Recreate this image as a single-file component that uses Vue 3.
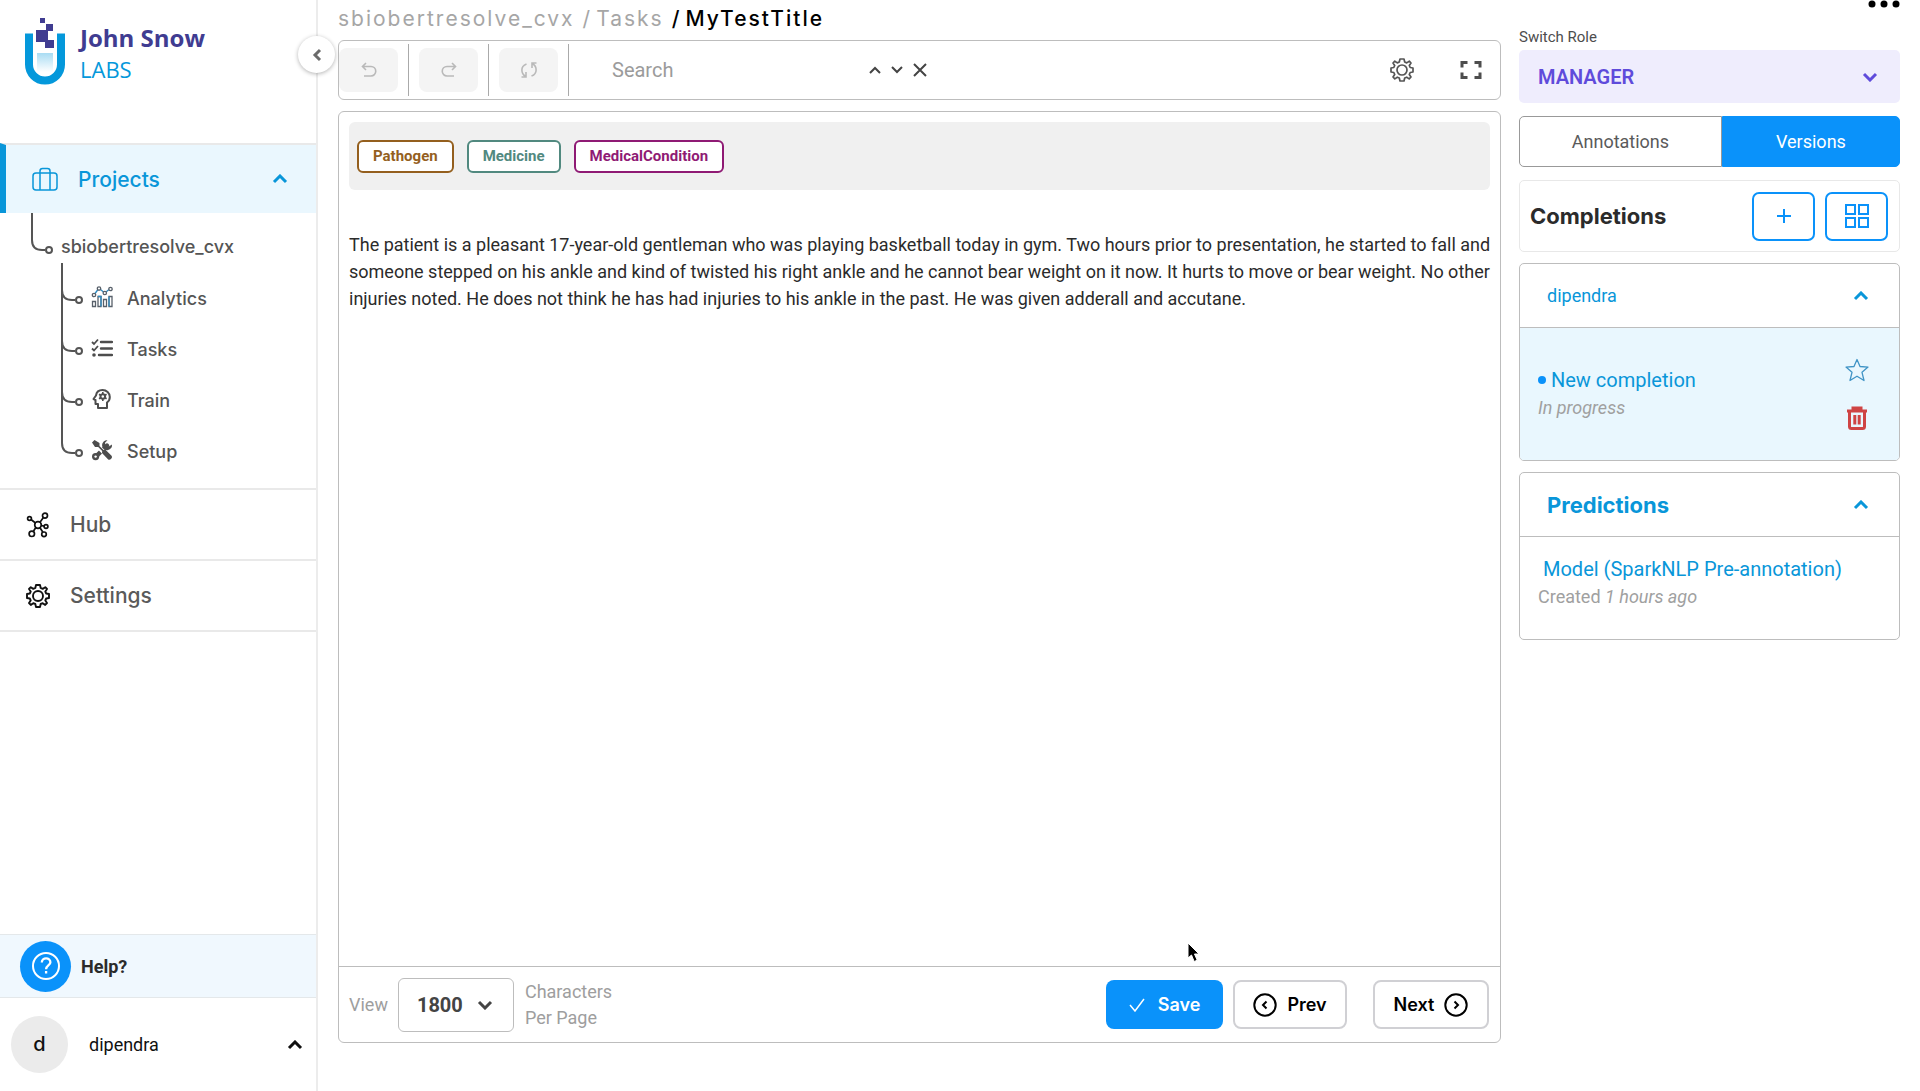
<script setup>
import { ref } from 'vue'

const search = ref('')
const perPage = ref('1800')
const role = ref('MANAGER')
const menu = ['Analytics', 'Tasks', 'Train', 'Setup']
const labels = [
  { name: 'Pathogen', tone: 'brown' },
  { name: 'Medicine', tone: 'teal' },
  { name: 'MedicalCondition', tone: 'plum' },
]
</script>

<template>
  <div class="page">
    <aside class="sidebar">
      <a class="logo" href="#" aria-label="John Snow Labs">
        <svg class="logo-mark" width="40" height="68" viewBox="0 0 40 68">
          <defs>
            <linearGradient id="liquid" x1="0" y1="0" x2="0" y2="1">
              <stop offset="0" stop-color="#a9dcf3" />
              <stop offset="1" stop-color="#ffffff" />
            </linearGradient>
          </defs>
          <rect x="12" y="35" width="16" height="19" fill="url(#liquid)" />
          <path d="M4 15.500V46.500a16 16 0 0 0 32 0V15.500" fill="none" stroke="#0498db" stroke-width="8" />
          <rect x="9" y="11" width="22" height="20" fill="#fff" />
          <path d="M15 0h5v5h-5zM21 6h7v7h-7zM11 12h12v12H11zM20 22h9v8h-9z" fill="#403c91" />
        </svg>
        <span class="logo-text"><b>John Snow</b><span>LABS</span></span>
      </a>
      <button class="collapse" aria-label="Collapse menu">
        <svg width="12" height="14" viewBox="0 0 12 14"><path d="M9 2 4 7l5 5" class="thick" /></svg>
      </button>

      <nav>
        <a class="row active" href="#">
          <svg class="row-icon" width="26" height="24" viewBox="0 0 26 24" fill="none" stroke="#0996d9" stroke-width="1.500">
            <rect x="1" y="6" width="24" height="17" rx="3" /><path d="M8 6v17M18 6v17M8 6V4q0-2.500 2.500-2.500h5Q18 1.500 18 4v2" />
          </svg>
          <span>Projects</span>
          <svg class="row-arrow" width="16" height="10" viewBox="0 0 16 10"><path d="m2 8 6-6 6 6" class="thick" /></svg>
        </a>
        <div class="tree">
          <a class="project" href="#">
            <svg width="24" height="60" viewBox="0 0 24 60" class="branch">
              <path d="M2 0v27q0 10 10 10h3" /><circle cx="19" cy="37" r="3" />
            </svg>
            <span>sbiobertresolve_cvx</span>
          </a>
          <ul>
            <li v-for="(item, i) in menu" :key="item">
              <a href="#">
                <svg width="24" height="51" viewBox="0 0 24 51" class="branch">
                  <path v-if="i === 0" d="M2-10V0" />
                  <path v-if="i < 3" d="M2 0v51" />
                  <path v-else d="M2 0v17" />
                  <path d="M2 17q0 10 10 10h3" /><circle cx="19" cy="27" r="3" />
                </svg>
                <svg v-if="i === 0" class="item-icon" width="22" height="22" viewBox="0 0 22 22" fill="none" stroke="#58606a" stroke-width="1.300">
                  <path d="M1.500 15.500h3v5h-3zM12.500 13.500h3v7h-3zM18 10.500h3v10h-3zM7 10.500h3v10H7z" />
                  <path d="M7 10.500h3v10M18 10.500v10" stroke="#2c8cc4" />
                  <path d="m4 7.500 3-4M9.500 3.500 12.500 6M15 6l3-2.500" stroke="#2c8cc4" />
                  <circle cx="3" cy="9" r="1.700" /><circle cx="8" cy="2.500" r="1.700" /><circle cx="13.800" cy="7" r="1.700" /><circle cx="19.500" cy="3" r="1.700" />
                </svg>
                <svg v-else-if="i === 1" class="item-icon" width="22" height="22" viewBox="0 0 22 22" fill="none" stroke="#4d4d4d" stroke-width="2.400">
                  <path d="M10 5h11M10 11.500h11M8 18h13" stroke-linecap="round" /><path d="m1 5 2 2 4-4.500M1 11.500l2 2L7 9" stroke-width="1.800" /><circle cx="3" cy="18" r="1.800" fill="#4d4d4d" stroke="none" />
                </svg>
                <svg v-else-if="i === 2" class="item-icon" width="22" height="22" viewBox="0 0 22 22" fill="none" stroke="#4d4d4d" stroke-width="2">
                  <path d="M7 20v-4H4.500v-4L2.500 11 5 7.500C5.500 4 8 2 11.500 2c4 0 7.300 3 7.300 7 0 2.700-1.300 4.500-2.800 5.500V20z" stroke-linejoin="round" />
                  <circle cx="11.800" cy="8.500" r="2.300" /><path d="M11.800 4v2M11.800 11v2M8 6.300l1.600 1M14 9.800l1.600 1M8 10.800l1.600-1M14 7.300l1.600-1" stroke-width="1.600" />
                </svg>
                <svg v-else class="item-icon" width="22" height="22" viewBox="0 0 22 22">
                  <path d="m5 17.500 11-11" stroke="#4d4d4d" stroke-width="4.400" stroke-linecap="round" />
                  <path d="M21 5.500a5 5 0 1 1-4.500-4.300l-2.500 2.500.5 3.300 3.300.5z" fill="#4d4d4d" />
                  <circle cx="4.600" cy="17.600" r="3.600" fill="#4d4d4d" /><circle cx="4.600" cy="17.600" r="1.200" fill="#fff" />
                  <path d="m3.500 4 14 14" stroke="#fff" stroke-width="4.500" />
                  <path d="m1 3.500 2.500-2.500 5 3v3l4 4 2-.3 6.300 6.300q.7 1.500-.6 2.800-1.500 1.400-3 .6L11 14l.2-2-4-4H4z" fill="#4d4d4d" />
                </svg>
                <span>{{ item }}</span>
              </a>
            </li>
          </ul>
        </div>
        <a class="row" href="#">
          <svg class="row-icon small" width="24" height="26" viewBox="0 0 24 26" fill="none" stroke="#111" stroke-width="1.700">
            <circle cx="12" cy="13" r="3.300" /><circle cx="3.500" cy="6.500" r="1.900" /><circle cx="19" cy="3.600" r="2.500" /><circle cx="20" cy="14.500" r="1.900" /><circle cx="5.800" cy="21.800" r="2.700" /><circle cx="18" cy="22.300" r="2.300" />
            <path d="m5 7.500 4.500 3.500M17.400 5.500 14 10.300M15.300 13.500l2.800.6M9.800 15.500l-2.500 4M14 15.700l2.900 4.600" />
          </svg>
          <span>Hub</span>
        </a>
        <a class="row" href="#">
          <svg class="row-icon small" width="24" height="24" viewBox="0 0 24 24" fill="none" stroke="#111" stroke-width="1.900">
            <path d="M10 1h4l.7 3 2 .9L19.300 3.200 21 5l-1.700 2.500.9 2L23 10v4l-2.800.5-.9 2L21 19l-1.800 1.900-2.500-1.700-2 .8-.7 3h-4l-.7-3-2-.8-2.500 1.700L3 19l1.700-2.500-.9-2L1 14v-4l2.800-.5.9-2L3 5l1.800-1.800 2.500 1.700 2-.9z" stroke-linejoin="round" /><circle cx="12" cy="12" r="5" />
          </svg>
          <span>Settings</span>
        </a>
      </nav>

      <div class="bottom">
        <a class="help" href="#">
          <span class="help-badge">
            <svg width="30" height="30" viewBox="0 0 30 30" fill="none" stroke="#fff" stroke-width="2">
              <circle cx="15" cy="15" r="13" /><path d="M10.800 11.500c0-5.500 8.600-5.500 8.600-.3 0 3.300-4.300 3.300-4.300 7M15.100 20v2.600" stroke-width="2.300" />
            </svg>
          </span>
          <b>Help?</b>
        </a>
        <button class="user">
          <span class="avatar">d</span><span>dipendra</span>
          <svg class="row-arrow" width="16" height="10" viewBox="0 0 16 10"><path d="m2 8 6-6 6 6" class="thick" /></svg>
        </button>
      </div>
    </aside>

    <main>
      <nav class="crumbs" aria-label="Breadcrumb">
        <a href="#">sbiobertresolve_cvx</a><i>/</i><a href="#">Tasks</a><i class="now">/</i><b>MyTestTitle</b>
      </nav>
      <div class="toolbar">
        <button class="tool" aria-label="Undo"><svg width="18" height="18" viewBox="0 0 18 18"><path d="M6 2 2.500 5.500 6 9M2.500 5.500h8.500a4.500 4.500 0 0 1 0 9.500H4" /></svg></button>
        <button class="tool" aria-label="Redo"><svg width="18" height="18" viewBox="0 0 18 18"><path d="m12 2 3.500 3.500L12 9M15.500 5.500H7A4.500 4.500 0 0 0 7 15h7" /></svg></button>
        <button class="tool" aria-label="Reset"><svg width="18" height="18" viewBox="0 0 18 18"><path d="M6.500 3C0 5.500 1 12.500 5.500 15.500M6 11v5H1.500M11.500 15c6.500-2.500 5.500-9.500 1-12.500M12 7V2h4.500" /></svg></button>
        <input v-model="search" class="search" type="text" placeholder="Search" aria-label="Search" />
        <div class="finder">
          <button aria-label="Previous match"><svg width="12" height="8" viewBox="0 0 12 8"><path d="m1 7 5-5 5 5" /></svg></button>
          <button aria-label="Next match"><svg width="12" height="8" viewBox="0 0 12 8"><path d="m1 1 5 5 5-5" /></svg></button>
          <button aria-label="Clear search"><svg width="14" height="14" viewBox="0 0 14 14"><path d="m1 1 12 12M13 1 1 13" /></svg></button>
        </div>
        <button class="plain" aria-label="Settings">
          <svg width="24" height="24" viewBox="0 0 24 24" fill="none" stroke="#555" stroke-width="1.700">
            <path d="M10 1h4l.7 3 2 .9L19.300 3.200 21 5l-1.700 2.500.9 2L23 10v4l-2.800.5-.9 2L21 19l-1.800 1.900-2.500-1.700-2 .8-.7 3h-4l-.7-3-2-.8-2.500 1.700L3 19l1.700-2.500-.9-2L1 14v-4l2.800-.5.9-2L3 5l1.800-1.800 2.500 1.700 2-.9z" stroke-linejoin="round" /><circle cx="12" cy="12" r="5" />
          </svg>
        </button>
        <button class="plain" aria-label="Full screen">
          <svg width="22" height="20" viewBox="0 0 22 20" fill="none" stroke="#4d4d4d" stroke-width="3"><path d="M2 7.500v-5h5.500M14.500 2.500H20v5M20 12.500v5h-5.500M7.500 17.500H2v-5" /></svg>
        </button>
      </div>

      <section class="document">
        <div class="labels">
          <button v-for="l in labels" :key="l.name" :class="['label', l.tone]">{{ l.name }}</button>
        </div>
        <p class="text">The patient is a pleasant 17-year-old gentleman who was playing basketball today in gym. Two hours prior to presentation, he started to fall and someone stepped on his ankle and kind of twisted his right ankle and he cannot bear weight on it now. It hurts to move or bear weight. No other injuries noted. He does not think he has had injuries to his ankle in the past. He was given adderall and accutane.</p>
        <svg class="cursor" width="16" height="22" viewBox="0 0 16 22"><path d="M1 1v15l3.500-3 2.700 6.500 3-1.300L7.500 12H12z" fill="#000" stroke="#fff" /></svg>
        <footer>
          <label for="per-page">View</label>
          <div class="picker">
            <select id="per-page" v-model="perPage"><option>1800</option></select>
            <svg width="16" height="10" viewBox="0 0 16 10"><path d="m2 2 6 6 6-6" class="thick" /></svg>
          </div>
          <span class="unit">Characters<br />Per Page</span>
          <div class="actions">
            <button class="save"><svg width="16" height="14" viewBox="0 0 16 14"><path d="m1 7 5 6L15 1" fill="none" stroke="#fff" stroke-width="1.500" /></svg>Save</button>
            <button class="step"><svg width="24" height="24" viewBox="0 0 24 24"><circle cx="12" cy="12" r="10.700" /><path d="m13.500 8.500-3.500 3.500 3.500 3.500" /></svg>Prev</button>
            <button class="step next">Next<svg width="24" height="24" viewBox="0 0 24 24"><circle cx="12" cy="12" r="10.700" /><path d="m10.500 8.500 3.500 3.500-3.500 3.500" /></svg></button>
          </div>
        </footer>
      </section>
    </main>

    <aside class="panel">
      <button class="more" aria-label="More"><svg width="32" height="8" viewBox="0 0 32 8"><circle cx="4" cy="4" r="3.500" /><circle cx="16" cy="4" r="3.500" /><circle cx="28" cy="4" r="3.500" /></svg></button>
      <label class="role-label" for="role">Switch Role</label>
      <div class="role">
        <select id="role" v-model="role"><option>MANAGER</option></select>
        <svg width="16" height="10" viewBox="0 0 16 10"><path d="m2 2 6 6 6-6" class="thick" /></svg>
      </div>
      <div class="tabs">
        <button>Annotations</button><button class="on">Versions</button>
      </div>
      <div class="completions">
        <h2>Completions</h2>
        <button aria-label="Add completion"><svg width="14" height="14" viewBox="0 0 14 14"><path d="M7 0v14M0 7h14" /></svg></button>
        <button aria-label="Grid view"><svg width="24" height="24" viewBox="0 0 24 24"><path d="M1 1h9v9H1zM14 1h9v9h-9zM1 14h9v9H1zM14 14h9v9h-9z" /></svg></button>
      </div>
      <section class="card">
        <button class="card-head"><span>dipendra</span><svg width="16" height="10" viewBox="0 0 16 10"><path d="m2 8 6-6 6 6" class="thick" /></svg></button>
        <div class="entry current">
          <div class="entry-text">
            <h3><i class="dot"></i>New completion</h3>
            <p><em>In progress</em></p>
          </div>
          <div class="entry-tools">
            <button aria-label="Star"><svg width="24" height="24" viewBox="0 0 24 24"><path d="m12 1.500 3 7 8 .6-6 5.200 2 8.200-7-4.300-7 4.300 2-8.200L1 9.100l8-.6z" fill="none" stroke="#4094c6" stroke-width="1.300" stroke-linejoin="round" /></svg></button>
            <button aria-label="Delete"><svg width="20" height="24" viewBox="0 0 20 24" fill="none" stroke="#cf4444" stroke-width="3"><path d="M0 5h20M6 4V2h8v2M2.500 5v15.500q0 2 2 2h11q2 0 2-2V5M7.800 9v9.500M12.200 9v9.500" /></svg></button>
          </div>
        </div>
      </section>
      <section class="card">
        <button class="card-head title"><span>Predictions</span><svg width="16" height="10" viewBox="0 0 16 10"><path d="m2 8 6-6 6 6" class="thick" /></svg></button>
        <div class="entry">
          <div class="entry-text">
            <h3 class="model">Model (SparkNLP Pre-annotation)</h3>
            <p>Created <em>1 hours ago</em></p>
          </div>
        </div>
      </section>
    </aside>
  </div>
</template>

<style>
body {
  margin: 0;
  background: #fff;
}
</style>

<style scoped>
* {
  box-sizing: border-box;
}
.page {
  display: flex;
  min-height: 100vh;
  font-family: Roboto, sans-serif;
  font-size: 18px;
  color: #2b2b2b;
}
svg {
  display: block;
  flex: none;
}
button {
  margin: 0;
  padding: 0;
  border: 0;
  background: none;
  font: inherit;
  color: inherit;
}
a {
  color: inherit;
  text-decoration: none;
}
.thick {
  fill: none;
  stroke: currentColor;
  stroke-width: 3;
}

.sidebar {
  position: relative;
  display: flex;
  flex: none;
  flex-direction: column;
  width: 318px;
  border-right: 2px solid #ececec;
}
.logo {
  display: flex;
  gap: 15px;
  height: 143px;
  padding: 18px 0 0 25px;
}
.logo-text {
  display: flex;
  flex-direction: column;
  padding-top: 4px;
  font-family: "Open Sans", sans-serif;
}
.logo-text b {
  font-size: 24px;
  line-height: 32px;
  color: #403c91;
}
.logo-text span {
  font-size: 22px;
  line-height: 30px;
  color: #0498db;
}
.collapse {
  position: absolute;
  top: 36px;
  right: -19px;
  display: grid;
  place-items: center;
  width: 37px;
  height: 37px;
  border-radius: 50%;
  background: #fff;
  box-shadow: 0 1px 4px rgba(0, 0, 0, 0.3);
  color: #6b6b6b;
}
.row {
  display: flex;
  align-items: center;
  height: 71px;
  padding-left: 26px;
  border-top: 2px solid #e9e9e9;
  font-family: Inter, sans-serif;
  font-size: 21px;
  font-weight: 500;
  color: #5a5a5a;
}
.row:last-child {
  height: 73px;
  border-bottom: 2px solid #e9e9e9;
}
.row-icon {
  margin-right: 20px;
}
.row.active {
  height: 70px;
  border-left: 6px solid #0996d9;
  background: #eaf7fe;
  color: #0996d9;
}
.row-arrow {
  margin-left: auto;
  margin-right: 28px;
}
.tree {
  height: 275px;
  padding-left: 30px;
  font-family: Inter, sans-serif;
  font-weight: 500;
  color: #555;
}
.project {
  display: flex;
  height: 60px;
  gap: 7px;
  line-height: 68px;
}
.branch {
  overflow: visible;
  fill: none;
  stroke: #555;
  stroke-width: 2;
}
ul {
  margin: 0;
  padding: 0 0 0 30px;
  list-style: none;
}
li a {
  display: flex;
  height: 51px;
  line-height: 51px;
}
.item-icon {
  margin: 13px 14px 0 7px;
}
.bottom {
  margin-top: auto;
}
.help {
  display: flex;
  align-items: center;
  gap: 10px;
  height: 64px;
  padding-left: 20px;
  border: solid #e4e8ea;
  border-width: 1px 0;
  background: #f0f8fe;
}
.help-badge {
  display: grid;
  place-items: center;
  width: 51px;
  height: 51px;
  border-radius: 50%;
  background: #0a92fa;
}
.user {
  display: flex;
  align-items: center;
  width: 100%;
  height: 93px;
  padding-left: 11px;
  color: #111;
}
.user .row-arrow {
  margin-right: 13px;
}
.avatar {
  width: 57px;
  height: 57px;
  margin-right: 21px;
  border-radius: 50%;
  background: #ebebeb;
  font-family: Inter, sans-serif;
  font-size: 20px;
  font-weight: 500;
  line-height: 57px;
}

main {
  display: flex;
  flex: 1;
  flex-direction: column;
  min-width: 0;
  padding: 0 18px 48px 20px;
}
.crumbs {
  display: flex;
  height: 40px;
  font-family: Inter, sans-serif;
  font-size: 21px;
  line-height: 38px;
  letter-spacing: 2px;
  color: #a6a6a6;
}
.crumbs i {
  margin: 0 4px 0 8px;
  font-style: normal;
}
.crumbs .now,
.crumbs b {
  font-weight: 500;
  color: #000;
}
.toolbar {
  display: flex;
  align-items: center;
  height: 60px;
  border: 1px solid #bdbdbd;
  border-radius: 6px;
}
.tool {
  position: relative;
  display: grid;
  place-items: center;
  width: 59px;
  height: 44px;
  margin-right: 21px;
  border-radius: 8px;
  background: #f4f4f4;
}
.tool::after {
  content: "";
  position: absolute;
  top: -4px;
  right: -11px;
  width: 1px;
  height: 52px;
  background: #aaa;
}
.tool svg {
  fill: none;
  stroke: #b9b9b9;
  stroke-width: 1.6;
}
.search {
  width: 240px;
  margin-left: 33px;
  padding: 0;
  border: 0;
  outline: 0;
  font: 20px Roboto, sans-serif;
}
.search::placeholder {
  color: #9b9b9b;
  opacity: 1;
}
.finder {
  display: flex;
  align-items: center;
  gap: 10px;
  margin: 0 auto 0 17px;
  fill: none;
  stroke: #444;
  stroke-width: 2;
}
.plain {
  margin-left: 46px;
}
.plain:last-child {
  margin-right: 18px;
}
.document {
  position: relative;
  display: flex;
  flex: 1;
  flex-direction: column;
  margin-top: 11px;
  border: 1px solid #bdbdbd;
  border-radius: 6px;
}
.labels {
  display: flex;
  align-items: center;
  gap: 13px;
  height: 68px;
  margin: 10px 10px 0;
  padding-left: 8px;
  border-radius: 6px;
  background: #f0f0f0;
}
.label {
  height: 33px;
  padding: 0 14px;
  border: 2px solid;
  border-radius: 6px;
  background: #fff;
  font-size: 15px;
  font-weight: 700;
}
.brown {
  color: #945f1e;
}
.teal {
  color: #51897f;
}
.plum {
  color: #8f1a74;
}
.text {
  margin: 41px 0 0 10px;
  line-height: 27px;
}
.cursor {
  position: absolute;
  right: 297px;
  bottom: 78px;
}
footer {
  display: flex;
  align-items: center;
  height: 76px;
  margin-top: auto;
  padding: 0 11px 0 10px;
  border-top: 1px solid #bdbdbd;
  color: #9e9e9e;
}
.picker,
.role {
  position: relative;
}
.picker {
  width: 116px;
  margin: 0 11px 0 10px;
  color: #444;
}
.picker svg {
  position: absolute;
  top: 22px;
  right: 21px;
  pointer-events: none;
}
select {
  width: 100%;
  appearance: none;
  color: inherit;
}
.picker select {
  height: 54px;
  padding: 0 18px;
  border: 1px solid #bdbdbd;
  border-radius: 6px;
  background: #fff;
  font: 700 20px Roboto, sans-serif;
}
.unit {
  line-height: 26px;
}
.actions {
  display: flex;
  gap: 10px;
  margin-left: auto;
  font-family: Inter, sans-serif;
  font-weight: 600;
}
.actions button {
  display: flex;
  align-items: center;
  justify-content: center;
  gap: 10px;
  height: 49px;
  border-radius: 8px;
}
.save {
  width: 117px;
  background: #0a92fa;
  color: #fff;
}
.save svg {
  margin-right: 3px;
}
.step {
  width: 114px;
  border: 2px solid #d0d0d4;
  color: #000;
}
.step svg {
  fill: none;
  stroke: #000;
  stroke-width: 2;
}
.next {
  width: 116px;
  margin-left: 16px;
}

.panel {
  flex: none;
  width: 401px;
  padding-right: 20px;
}
.more {
  display: block;
  margin-left: auto;
}
.role-label {
  display: block;
  margin-top: 17px;
  font-size: 15px;
  line-height: 25px;
  color: #4d4d4d;
}
.role {
  color: #5f4bdb;
}
.role select {
  display: block;
  height: 53px;
  padding: 0 19px;
  border: 0;
  border-radius: 5px;
  background: #efedfd;
  font: 600 20px Roboto, sans-serif;
}
.role svg {
  position: absolute;
  top: 22px;
  right: 22px;
  pointer-events: none;
}
.tabs {
  display: flex;
  height: 51px;
  margin-top: 13px;
}
.tabs button {
  flex: 203;
  border: 1px solid #999;
  border-radius: 5px 0 0 5px;
  color: #5a5a5a;
}
.tabs .on {
  flex: 178;
  border-color: #0a92fa;
  border-radius: 0 5px 5px 0;
  background: #0a92fa;
  color: #fff;
}
.completions {
  display: flex;
  align-items: center;
  gap: 10px;
  height: 72px;
  margin-top: 13px;
  padding: 0 11px 0 10px;
  border: 1px solid #e8e8e8;
  border-radius: 5px;
}
h2 {
  flex: 1;
  margin: 0;
  font-family: Inter, sans-serif;
  font-size: 22px;
  line-height: 30px;
}
.completions button {
  display: grid;
  place-items: center;
  width: 63px;
  height: 49px;
  border: 2px solid #0a92fa;
  border-radius: 7px;
}
.completions svg {
  fill: none;
  stroke: #0a92fa;
  stroke-width: 2;
}
.card {
  margin-top: 11px;
  overflow: hidden;
  border: 1px solid #bdbdbd;
  border-radius: 5px;
  color: #0996d9;
}
.card-head {
  display: flex;
  align-items: center;
  justify-content: space-between;
  width: 100%;
  height: 64px;
  padding: 0 30px 0 27px;
  border-bottom: 1px solid #bdbdbd;
}
.title {
  font-family: Inter, sans-serif;
  font-size: 22px;
  font-weight: 700;
}
.entry {
  display: flex;
  justify-content: space-between;
  min-height: 102px;
  padding: 18px 30px 0 18px;
}
.entry.current {
  min-height: 132px;
  padding-top: 38px;
  background: #e9f7fe;
}
h3 {
  display: flex;
  align-items: center;
  gap: 5px;
  margin: 0;
  font-size: 20px;
  font-weight: 400;
  line-height: 28px;
}
.model {
  padding-left: 5px;
}
.dot {
  width: 8px;
  height: 8px;
  border-radius: 50%;
  background: #0a92fa;
}
.entry p {
  margin: 0;
  line-height: 28px;
  color: #a0a0a0;
}
.entry-tools {
  display: flex;
  flex-direction: column;
  align-items: center;
  gap: 24px;
  margin-top: -8px;
}
</style>
